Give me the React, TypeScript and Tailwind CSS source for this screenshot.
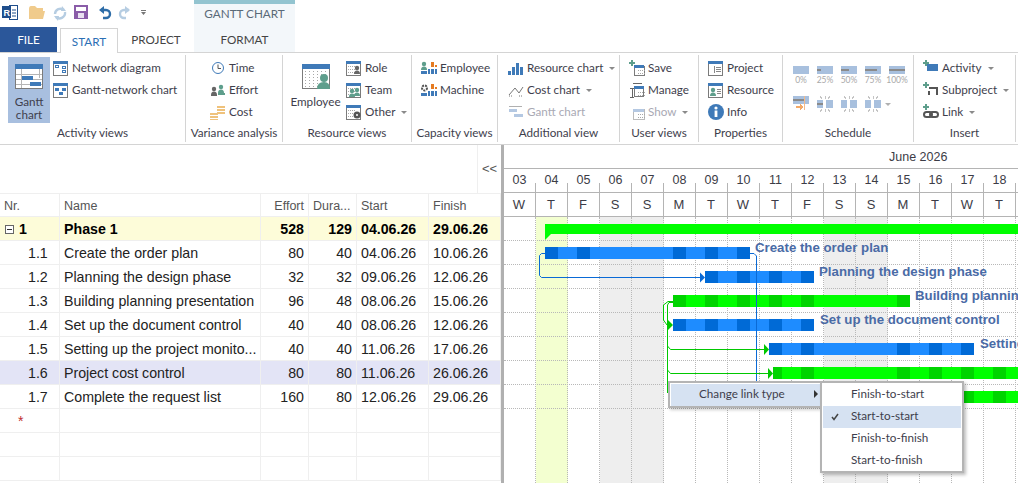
import React from "react";

const B = "#3f7ab8", G = "#7b7b7b", T = "#5e9e8c", O = "#e57b22";

function Ico({ w = 16, h = 16, children }: { w?: number; h?: number; children: React.ReactNode }) {
  return <svg width={w} height={h} viewBox={`0 0 ${w} ${h}`} className="shrink-0" shapeRendering="crispEdges">{children}</svg>;
}

const Frame = ({ inner }: { inner?: React.ReactNode }) => (
  <>
    <rect x="0.5" y="1.5" width="14" height="14" fill="#fff" stroke={G} />
    <rect x="0" y="1" width="15" height="3" fill={B} />
    {inner}
  </>
);
const dots = (x: number, y: number) => (
  <g fill="#a8a8a8">
    {[0, 2, 4, 6].map((i) => [0, 2, 4].map((j) => <rect key={`${i}${j}`} x={x + i} y={y + j * 1.5} width="1" height="1" />))}
  </g>
);
const Person = ({ x, y, c }: { x: number; y: number; c: string }) => (
  <g fill={c} shapeRendering="auto">
    <circle cx={x + 3} cy={y + 2} r="2.2" />
    <path d={`M${x} ${y + 8} q0 -3.5 3 -3.5 q3 0 3 3.5z`} />
  </g>
);
const Plus = ({ x = 0, y = 0 }: { x?: number; y?: number }) => (
  <path d={`M${x + 2} ${y}h2v2h2v2h-2v2h-2v-2h-2v-2h2z`} fill={T} />
);
const Bars = ({ x, y }: { x: number; y: number }) => (
  <g>
    <rect x={x} y={y + 7} width="2" height="5" fill={B} />
    <rect x={x + 3} y={y} width="3" height="5" fill={O} />
    <rect x={x + 3} y={y + 7} width="3" height="5" fill={B} />
    <rect x={x + 7} y={y + 3} width="2" height="2" fill={O} />
    <rect x={x + 7} y={y + 7} width="2" height="5" fill={B} />
  </g>
);

const icons: Record<string, React.ReactNode> = {
  network: <Ico><Frame inner={<g fill="none" stroke={B}><rect x="2.5" y="5.5" width="3" height="2" /><rect x="9.5" y="6.5" width="3" height="2" /><rect x="9.5" y="10.5" width="3" height="2" /></g>} /></Ico>,
  gnet: <Ico><Frame inner={<g fill={B}><rect x="2" y="6" width="4" height="3" /><rect x="9" y="6" width="4" height="3" /><rect x="6" y="10" width="4" height="3" /></g>} /></Ico>,
  time: (
    <Ico><g shapeRendering="auto" fill="none" stroke={B}><circle cx="8" cy="8" r="5.5" /><path d="M8 4.5V8.5H11" stroke="#555" /></g></Ico>
  ),
  effort: <Ico><Person x={1} y={5} c="#666" /><Person x={8} y={3} c={T} /><rect x="8" y="11" width="7" height="2" fill={T} /><rect x="1" y="13" width="6" height="1" fill="#666" /></Ico>,
  cost: (
    <Ico>
      <g fill="#efc27c"><rect x="0" y="9" width="8" height="2" /><rect x="0" y="12" width="8" height="2" /><rect x="0" y="15" width="8" height="1" /><rect x="7" y="2" width="8" height="2" /><rect x="7" y="5" width="8" height="2" /><rect x="7" y="8" width="8" height="2" /></g>
    </Ico>
  ),
  role: <Ico><Frame inner={<>{dots(2, 6)}<Person x={8} y={6} c="#666" /></>} /></Ico>,
  team: <Ico><Frame inner={<>{dots(2, 6)}<Person x={3} y={7} c={T} /><Person x={8} y={6} c={T} /></>} /></Ico>,
  other: <Ico><Frame inner={<>{dots(2, 6)}<circle cx="11" cy="11" r="3.5" fill="#555" shapeRendering="auto" /><circle cx="11" cy="11" r="1" fill="#fff" shapeRendering="auto" /></>} /></Ico>,
  cemp: <Ico><Person x={0} y={2} c={T} /><rect x="0" y="11" width="6" height="3" fill={B} /><Bars x={7} y={2} /></Ico>,
  cmach: <Ico><g shapeRendering="auto"><circle cx="3.500" cy="6" r="2.500" fill="none" stroke="#555" strokeWidth="2" strokeDasharray="2 1" /></g><rect x="0" y="11" width="6" height="3" fill={B} /><Bars x={7} y={2} /></Ico>,
  rchart: <Ico><rect x="0" y="11" width="3" height="4" fill={B} /><rect x="4" y="7" width="3" height="8" fill={B} /><rect x="8" y="3" width="3" height="12" fill={B} /><rect x="12" y="7" width="3" height="8" fill={B} /></Ico>,
  cchart: <Ico><g shapeRendering="auto" fill="none" stroke="#777"><path d="M1 13L7 6L11 11L15 5" /><path d="M4 14H1M14 14H11" strokeDasharray="1 1" /></g></Ico>,
  gchart: <Ico><rect x="1" y="2" width="13" height="1" fill="#b0b0b0" /><rect x="1" y="5" width="8" height="3" fill="#b4c8e2" /><rect x="6" y="10" width="9" height="3" fill="#b4c8e2" /></Ico>,
  save: <Ico><Plus x={0} y={0} /><rect x="5" y="6" width="10" height="9" fill="#fff" stroke={G} /><rect x="5" y="5" width="10" height="3" fill={B} />{dots(9, 10)}</Ico>,
  manage: <Ico><path d="M4 1h9M4 1v1M1 6h4M3 6v9M1 15h4" stroke="#666" fill="none" /><rect x="5.5" y="5.5" width="9" height="9" fill="#fff" stroke={G} /><rect x="5" y="4" width="10" height="3" fill={B} />{dots(9, 10)}</Ico>,
  show: <Ico><rect x="4" y="5" width="11" height="10" fill="#fff" stroke="#bbb" /><rect x="4" y="5" width="11" height="3" fill="#b4c8e2" />{dots(9, 10)}</Ico>,
  project: <Ico><Frame inner={<path d="M6 6v7M8 7h5M8 9h5M8 11h5" stroke="#888" fill="none" />} /></Ico>,
  resource: <Ico><Frame inner={<><Person x={2} y={6} c={T} /><path d="M9 7h4M9 9h4M9 11h4" stroke="#888" /></>} /></Ico>,
  info: (
    <Ico><g shapeRendering="auto"><circle cx="8" cy="8" r="8" fill={B} /><circle cx="8" cy="4" r="1.6" fill="#fff" /><rect x="6.6" y="6.5" width="2.8" height="6.5" fill="#fff" /></g></Ico>
  ),
  activity: <Ico><Plus x={0} y={0} /><rect x="4" y="4" width="11" height="7" fill={B} /></Ico>,
  subproject: <Ico><Plus x={0} y={0} /><path d="M6 5h9v2h-9zM5 9h2v4h-2zM13 7h2v6h-2z" fill="#555" /></Ico>,
  link: (
    <Ico><Plus x={0} y={0} /><g shapeRendering="auto" fill="none" stroke="#555" strokeWidth="2"><rect x="1" y="8" width="8" height="5" rx="2.5" /><rect x="7" y="8" width="8" height="5" rx="2.5" /></g></Ico>
  ),
};

function Caret() {
  return <span className="ml-[3px] mt-[1px] h-0 w-0 border-x-[3px] border-t-[3px] border-x-transparent border-t-[#8a8a8a]" />;
}

function Item({ icon, label, caret, off, gap = "gap-[3px]" }: { icon: string; label: string; caret?: boolean; off?: boolean; gap?: string }) {
  return (
    <div className={`flex h-[22px] items-center whitespace-nowrap ${gap} ${off ? "text-[#a9a9b4]" : ""}`}>
      {icons[icon]}
      <span>{label}</span>
      {caret && <Caret />}
    </div>
  );
}

function Group({ label, w, children }: { label: string; w: string; children: React.ReactNode }) {
  return (
    <div className={`flex h-[87px] shrink-0 flex-col border-r border-[#d4d4d4] ${w}`}>
      <div className="flex h-[68px] pt-[2px]">{children}</div>
      <div className="h-[19px] text-center leading-[19px]">{label}</div>
    </div>
  );
}

const BigGantt = (
  <svg width="28" height="25" viewBox="0 0 28 25" shapeRendering="crispEdges">
    <rect x="0.5" y="0.5" width="27" height="24" fill="#fff" stroke={G} />
    <rect x="0" y="0" width="28" height="5" fill={B} />
    <path d="M1 10.5H27M1 15.5H27M1 20.5H27M6.5 5V24M24.5 5V14" stroke="#b5b5b5" />
    <rect x="7" y="12" width="11" height="4" fill={B} />
    <rect x="15" y="18" width="11" height="4" fill={B} />
  </svg>
);
const BigEmployee = (
  <svg width="28" height="25" viewBox="0 0 28 25" shapeRendering="crispEdges">
    <rect x="0.5" y="0.5" width="27" height="24" fill="#fff" stroke={G} />
    <rect x="0" y="0" width="28" height="5" fill={B} />
    <g fill="#a8a8a8">
      {[3, 7, 11, 15, 19, 23].map((x) => [7, 10, 13, 16, 19, 22].map((y) => <rect key={`${x}-${y}`} x={x} y={y} width="1" height="1" />))}
    </g>
    <g fill={T} shapeRendering="auto">
      <circle cx="22" cy="14" r="4" />
      <path d="M15 25q0 -7 7 -7q6 0 6 7z" />
    </g>
  </svg>
);

function Pct({ fill, label }: { fill: number; label: string }) {
  return (
    <div className="flex w-4 flex-col items-center">
      <svg width="16" height="8" viewBox="0 0 16 8" shapeRendering="crispEdges" className="shrink-0">
        <rect width="16" height="8" fill="#a8c0de" />
        {fill > 0 && <rect y="3" width={fill} height="2" fill="#8a8a8a" />}
      </svg>
      <span className="mt-[1px] text-[8.5px] leading-[10px] text-[#a8a8a8]">{label}</span>
    </div>
  );
}

const Spark = () => (
  <path d="M3 0l2 3M13 0l-2 3M8 0v3M3 16l2 -3M13 16l-2 -3M8 16v-3" stroke="#c4c4c4" fill="none" />
);
function Sched({ kind }: { kind: number }) {
  return (
    <svg width="16" height="16" viewBox="0 0 16 16" className="shrink-0" shapeRendering="crispEdges">
      {kind === 0 ? (
        <>
          <rect y="0" width="16" height="8" fill="#a8c0de" />
          <rect y="3" width="12" height="2" fill="#8a8a8a" />
          <rect x="11" y="0" width="1" height="14" fill="#f2b98a" />
          <path d="M3 10h4v-2l3 3l-3 3v-2h-4z" fill="#f2a968" />
        </>
      ) : (
        <>
          <Spark />
          <rect y="4" width="6" height="8" fill="#a8c0de" />
          <rect x="9" y="4" width="7" height="8" fill="#a8c0de" />
          {kind === 1 && <rect y="7" width="6" height="2" fill="#8a8a8a" />}
        </>
      )}
    </svg>
  );
}

function Ribbon() {
  return (
    <div className="flex h-[93px] border-y border-[#d4d4d4] pt-[2px] font-['Lato',sans-serif] text-[11.7px] text-[#3e3e4c]">
      <Group label="Activity views" w="w-[186px]">
        <div className="ml-2 flex h-[66px] w-[42px] flex-col items-center bg-[#a8bfdf] pt-[7px] text-center leading-[13px]">
          {BigGantt}
          <span className="mt-[6px]">Gantt<br />chart</span>
        </div>
        <div className="ml-[3px] flex flex-col">
          <Item icon="network" label="Network diagram" />
          <Item icon="gnet" label="Gantt-network chart" />
        </div>
      </Group>
      <Group label="Variance analysis" w="w-[97px]">
        <div className="ml-6 flex flex-col">
          <Item icon="time" label="Time" />
          <Item icon="effort" label="Effort" />
          <Item icon="cost" label="Cost" />
        </div>
      </Group>
      <Group label="Resource views" w="w-[129px]">
        <div className="ml-2 flex h-[66px] w-[49px] flex-col items-center pt-[7px]">
          {BigEmployee}
          <span className="mt-[6px] leading-[13px]">Employee</span>
        </div>
        <div className="ml-[6px] flex flex-col">
          <Item icon="role" label="Role" />
          <Item icon="team" label="Team" />
          <Item icon="other" label="Other" caret />
        </div>
      </Group>
      <Group label="Capacity views" w="w-[86px]">
        <div className="ml-[9px] flex flex-col">
          <Item icon="cemp" label="Employee" />
          <Item icon="cmach" label="Machine" />
        </div>
      </Group>
      <Group label="Additional view" w="w-[122px]">
        <div className="ml-[10px] flex flex-col">
          <Item icon="rchart" label="Resource chart" caret />
          <Item icon="cchart" label="Cost chart" caret />
          <Item icon="gchart" label="Gantt chart" off />
        </div>
      </Group>
      <Group label="User views" w="w-[79px]">
        <div className="ml-[9px] flex flex-col">
          <Item icon="save" label="Save" />
          <Item icon="manage" label="Manage" />
          <Item icon="show" label="Show" caret off />
        </div>
      </Group>
      <Group label="Properties" w="w-[84px]">
        <div className="ml-[9px] flex flex-col">
          <Item icon="project" label="Project" />
          <Item icon="resource" label="Resource" />
          <Item icon="info" label="Info" />
        </div>
      </Group>
      <Group label="Schedule" w="w-[131px]">
        <div className="ml-[10px] flex flex-col gap-[11px] pt-[9px]">
          <div className="flex gap-2">
            <Pct fill={0} label="0%" />
            <Pct fill={4} label="25%" />
            <Pct fill={8} label="50%" />
            <Pct fill={12} label="75%" />
            <Pct fill={16} label="100%" />
          </div>
          <div className="flex items-center gap-2">
            <Sched kind={0} />
            <Sched kind={1} />
            <Sched kind={2} />
            <Sched kind={3} />
            <span className="-ml-[4px] h-0 w-0 border-x-[3px] border-t-[3px] border-x-transparent border-t-[#b0b0b0]" />
          </div>
        </div>
      </Group>
      <Group label="Insert" w="w-[102px]">
        <div className="ml-[9px] flex flex-col">
          <Item icon="activity" label="Activity" caret />
          <Item icon="subproject" label="Subproject" caret />
          <Item icon="link" label="Link" caret />
        </div>
      </Group>
    </div>
  );
}

function Top() {
  return (
    <div className="font-['Lato',sans-serif] text-[11.7px] text-[#444]">
      <div className="flex h-[27px]">
        <div className="flex w-[194px] items-center">
          <svg width="150" height="27" viewBox="0 0 150 27">
            <rect x="9.500" y="5.500" width="8" height="14" fill="#fff" stroke="#1f4e8c" />
            <rect x="2" y="6" width="9" height="12" fill="#1f4e8c" />
            <text x="3.500" y="15.500" fontSize="9" fontWeight="700" fill="#fff" fontFamily="'Liberation Sans'">R</text>
            <path d="M12 10h4M12 13h4M12 16h4" stroke="#1f4e8c" />
            <path d="M29 9q0 -3 2 -3h4l2 2h6v3h-14zM29 11h16l-2 8h-14z" fill="#f0cb8c" />
            <g fill="none" stroke="#b6cde2" strokeWidth="2.4">
              <path d="M55 14a5.5 5.5 0 0 1 9 -4" />
              <path d="M65 12a5.5 5.5 0 0 1 -9 5" />
            </g>
            <path d="M62 6l4 5h-5zM58 21l-4 -5h5z" fill="#b6cde2" />
            <rect x="74" y="5" width="14" height="14" fill="#8a5ca8" />
            <rect x="76" y="7" width="10" height="4" fill="#fff" />
            <rect x="78" y="13" width="6" height="5" fill="#e9e0f0" />
            <path d="M101 10h5a4 4 0 0 1 0 8h-3" fill="none" stroke="#2e6da8" strokeWidth="2.4" />
            <path d="M104 6v8l-5 -4z" fill="#2e6da8" />
            <path d="M129 10h-5a4 4 0 0 0 0 8h2" fill="none" stroke="#b6cde2" strokeWidth="2.4" />
            <path d="M125 6v8l5 -4z" fill="#b6cde2" />
            <path d="M141 10h5v1h-5zM141 12h5l-2.500 3z" fill="#777" />
          </svg>
        </div>
        <div className="w-[101px] border-t-4 border-[#93c4d0] bg-[#f3f7fa] pt-[2px] text-center leading-[15px] text-[#5a6a78]">
          GANTT CHART
        </div>
      </div>
      <div className="flex h-[25px] items-stretch">
        <div className="flex w-[57px] items-center justify-center bg-[#2b579a] pt-px text-white">FILE</div>
        <div className="relative z-10 ml-[3px] -mb-[1px] mt-[1px] flex w-[58px] items-center justify-center border-x border-t border-[#d4d4d4] bg-white pt-px text-[#2b6fb5]">
          START
        </div>
        <div className="flex w-[76px] items-center justify-center pt-px">PROJECT</div>
        <div className="flex w-[101px] items-center justify-center bg-[#f3f7fa] pt-px">FORMAT</div>
      </div>
    </div>
  );
}

const cols = "grid grid-cols-[60px_201px_48px_48px_72px_72px]";
const rows = [
  { n: "1", name: "Phase 1", e: "528", d: "129", s: "04.06.26", f: "29.06.26", bold: true },
  { n: "1.1", name: "Create the order plan", e: "80", d: "40", s: "04.06.26", f: "10.06.26" },
  { n: "1.2", name: "Planning the design phase", e: "32", d: "32", s: "09.06.26", f: "12.06.26" },
  { n: "1.3", name: "Building planning presentation", e: "96", d: "48", s: "08.06.26", f: "15.06.26" },
  { n: "1.4", name: "Set up the document control", e: "40", d: "40", s: "08.06.26", f: "12.06.26" },
  { n: "1.5", name: "Setting up the project monito...", e: "40", d: "40", s: "11.06.26", f: "17.06.26" },
  { n: "1.6", name: "Project cost control", e: "80", d: "80", s: "11.06.26", f: "26.06.26", sel: true },
  { n: "1.7", name: "Complete the request list", e: "160", d: "80", s: "12.06.26", f: "29.06.26" },
];
const cell = "flex h-6 items-center overflow-hidden whitespace-nowrap border-b border-r border-[#efefef]";

function Table() {
  return (
    <div className="w-[501px] shrink-0 font-['Liberation_Sans',sans-serif] text-[14.2px] text-[#222]">
      <div className="flex h-[48px] justify-end">
        <div className="flex w-[24px] items-center justify-center border-l border-[#efefef] pb-[1px] text-[13px] text-[#555]">&lt;&lt;</div>
      </div>
      <div className={`${cols} border-t border-[#efefef] text-[12.5px] text-[#555]`}>
        <div className={`${cell} -mt-px pl-1 pt-[4px]`}>Nr.</div>
        <div className={`${cell} -mt-px pl-1 pt-[4px]`}>Name</div>
        <div className={`${cell} -mt-px justify-end pr-1 pt-[4px]`}>Effort</div>
        <div className={`${cell} -mt-px pl-1 pt-[4px]`}>Dura...</div>
        <div className={`${cell} -mt-px pl-1 pt-[4px]`}>Start</div>
        <div className={`${cell} -mt-px pl-1 pt-[4px]`}>Finish</div>
      </div>
      {rows.map((r) => (
        <div key={r.n} className={`${cols} ${r.bold ? "bg-[#fdfcd9] font-bold text-black" : ""} ${r.sel ? "bg-[#e3e4f6]" : ""}`}>
          <div className={`${cell} pt-[2px] ${r.bold ? "pl-[5px]" : "pl-7"}`}>
            {r.bold && (
              <span className="mr-[5px] flex h-[9px] w-[9px] items-center justify-center border border-[#666] bg-white">
                <span className="h-px w-[5px] bg-[#333]" />
              </span>
            )}
            {r.n}
          </div>
          <div className={`${cell} pl-1 pt-[2px]`}>{r.name}</div>
          <div className={`${cell} justify-end pr-1 pt-[2px]`}>{r.e}</div>
          <div className={`${cell} justify-end pr-1 pt-[2px]`}>{r.d}</div>
          <div className={`${cell} pl-1 pt-[2px]`}>{r.s}</div>
          <div className={`${cell} pl-1 pt-[2px]`}>{r.f}</div>
        </div>
      ))}
      {["*", "", ""].map((t, i) => (
        <div key={i} className={cols}>
          <div className={`${cell} pl-[18px] pt-[2px] text-[#c03030]`}>{t}</div>
          <div className={cell} />
          <div className={cell} />
          <div className={cell} />
          <div className={cell} />
          <div className={cell} />
        </div>
      ))}
    </div>
  );
}

const days = [
  ["03", "W"], ["04", "T"], ["05", "F"], ["06", "S"], ["07", "S"], ["08", "M"], ["09", "T"], ["10", "W"],
  ["11", "T"], ["12", "F"], ["13", "S"], ["14", "S"], ["15", "M"], ["16", "T"], ["17", "W"], ["18", "T"],
];
const dayLine = "border-[#b4b4b4]";

const darkRanges = [[545, 558], [577, 590], [673, 686], [705, 718], [737, 750], [769, 782], [801, 814], [897, 910], [929, 942], [961, 974], [993, 1006]];

function segments(a: number, b: number) {
  const out: { w: number; dark: boolean }[] = [];
  let x = a;
  for (const [s, e] of darkRanges) {
    if (e <= a || s >= b) continue;
    if (s > x) out.push({ w: s - x, dark: false });
    const st = Math.max(s, x);
    out.push({ w: Math.min(e, b) - st, dark: true });
    x = Math.min(e, b);
  }
  if (x < b) out.push({ w: b - x, dark: false });
  return out;
}

function Bar({ from, to, green, label, labelGap = 5 }: { from: number; to: number; green?: boolean; label?: string; labelGap?: number }) {
  return (
    <div className="flex h-6 items-start overflow-hidden whitespace-nowrap border-b border-dotted border-[#b8b8b8] pt-[6px]">
      <div className="flex h-3 shrink-0" style={{ marginLeft: from - 504 }}>
        {segments(from, to).map((s, i) => (
          <div
            key={i}
            className={`h-3 ${green ? (s.dark ? "bg-[#00d400]" : "bg-[#00ff00]") : s.dark ? "bg-[#006ad6]" : "bg-[#1e8cff]"}`}
            style={{ width: s.w }}
          />
        ))}
      </div>
      {label && (
        <span className="-mt-[7px] text-[13.25px] font-bold leading-4 text-[#4a6ba6]" style={{ marginLeft: labelGap }}>
          {label}
        </span>
      )}
    </div>
  );
}

function Links() {
  return (
    <svg className="absolute left-0 top-0" width="514" height="266" viewBox="504 217 514 266" fill="none">
      <g stroke="#0a6ad6">
        <path d="M545 253.500H541.500L539.500 255.500V275.500L541.500 277.500H701" />
        <path d="M750 253.500H754L756.500 256V381" />
      </g>
      <path d="M700 272.500L705 277.500L700 282.500z" fill="#0a6ad6" />
      <g stroke="#00c800">
        <path d="M673 301.500H668L663.500 305V320L667 325" />
        <path d="M673 302.500H669L667.500 305V393" />
        <path d="M667.500 346L670.500 349.500H765" />
        <path d="M667.500 370L670.500 373.500H769" />
      </g>
      <g fill="#00c800">
        <path d="M667 319L673 325L667 331z" />
        <path d="M764 344L769 349.500L764 355z" />
        <path d="M768 368L773 373.500L768 379z" />
      </g>
    </svg>
  );
}

function Menu() {
  return (
    <div className="absolute left-[164px] top-[164px] flex items-start font-['Lato',sans-serif] text-[11.7px] text-[#3e3e4c]">
      <div className="h-[27px] w-[152px] border-2 border-[#b4b4b4] border-r-0 bg-white p-px pr-0 shadow-[2px_2px_3px_rgba(0,0,0,0.2)]">
        <div className="flex h-[22px] items-center justify-between bg-[#d6e2f2] pb-[2px] pl-[28px] pr-[2px]">
          <span>Change link type</span>
          <span className="h-0 w-0 border-y-4 border-l-4 border-y-transparent border-l-[#333]" />
        </div>
      </div>
      <div className="h-[92px] w-[144px] border-2 border-[#b4b4b4] bg-white p-px shadow-[2px_2px_3px_rgba(0,0,0,0.25)]">
        <div className="flex h-[22px] items-center pb-[2px] pl-7">Finish-to-start</div>
        <div className="relative flex h-[22px] items-center bg-[#d6e2f2] pb-[2px] pl-7">
          <svg className="absolute left-2 top-[7px]" width="8" height="8" viewBox="0 0 8 8" fill="none">
            <path d="M1 4L3 6.500L7 1" stroke="#444" strokeWidth="1.500" />
          </svg>
          Start-to-start
        </div>
        <div className="flex h-[22px] items-center pb-[2px] pl-7">Finish-to-finish</div>
        <div className="flex h-[22px] items-center pb-[2px] pl-7">Start-to-finish</div>
      </div>
    </div>
  );
}

function Chart() {
  return (
    <div className="min-w-0 flex-1 overflow-hidden font-['Liberation_Sans',sans-serif] text-[12.5px] text-[#3c3c46]">
      <div className={`h-6 border-b pl-[385px] leading-[25px] ${dayLine}`}>
        <span>June 2026</span>
      </div>
      <div className={`flex h-6 border-b ${dayLine}`}>
        {days.map(([d]) => (
          <div key={d} className="relative flex h-[23px] w-8 shrink-0 items-center justify-center pr-px">
            {d}
            <span className="absolute bottom-0 right-0 h-[9px] w-px bg-[#b4b4b4]" />
          </div>
        ))}
      </div>
      <div className={`flex h-6 border-b ${dayLine}`}>
        {days.map(([d, l]) => (
          <div key={d} className={`flex h-[23px] w-8 shrink-0 items-center justify-center border-r pr-px text-[13px] ${dayLine}`}>
            {l}
          </div>
        ))}
      </div>
      <div className="relative h-[266px]">
        <div className="absolute inset-0 flex">
          {days.map(([d, l], i) => (
            <div
              key={d}
              className={`h-full w-8 shrink-0 border-r border-dotted border-[#b8b8b8] ${i === 1 ? "bg-[#f3ffd0]" : ""} ${l === "S" ? "bg-[#eeeeee]" : ""}`}
            />
          ))}
        </div>
        <div className="relative">
          <div className="relative flex h-6 items-start border-b border-dotted border-[#b8b8b8] pt-[7px]">
            <div className="ml-[41px] h-[10px] flex-1 bg-[#00ff00]" />
            <svg className="absolute left-[41px] top-[17px]" width="6" height="6" viewBox="0 0 6 6"><path d="M0 0H6L0 6z" fill="#00ff00" /></svg>
          </div>
          <Bar from={545} to={750} label="Create the order plan" />
          <Bar from={705} to={814} label="Planning the design phase" />
          <Bar from={673} to={910} green label="Building planning" />
          <Bar from={673} to={814} label="Set up the document control" labelGap={6} />
          <Bar from={769} to={974} label="Setting" labelGap={6} />
          <Bar from={773} to={1018} green />
          <Bar from={801} to={1018} green />
        </div>
        <Links />
        <Menu />
      </div>
    </div>
  );
}

export default function App() {
  return (
    <div className="h-[483px] w-[1018px] overflow-hidden bg-white font-['Lato',sans-serif]">
      <Top />
      <Ribbon />
      <div className="flex h-[338px]">
        <Table />
        <div className="w-[3px] shrink-0 bg-[#b0b0b0]" />
        <Chart />
      </div>
    </div>
  );
}
